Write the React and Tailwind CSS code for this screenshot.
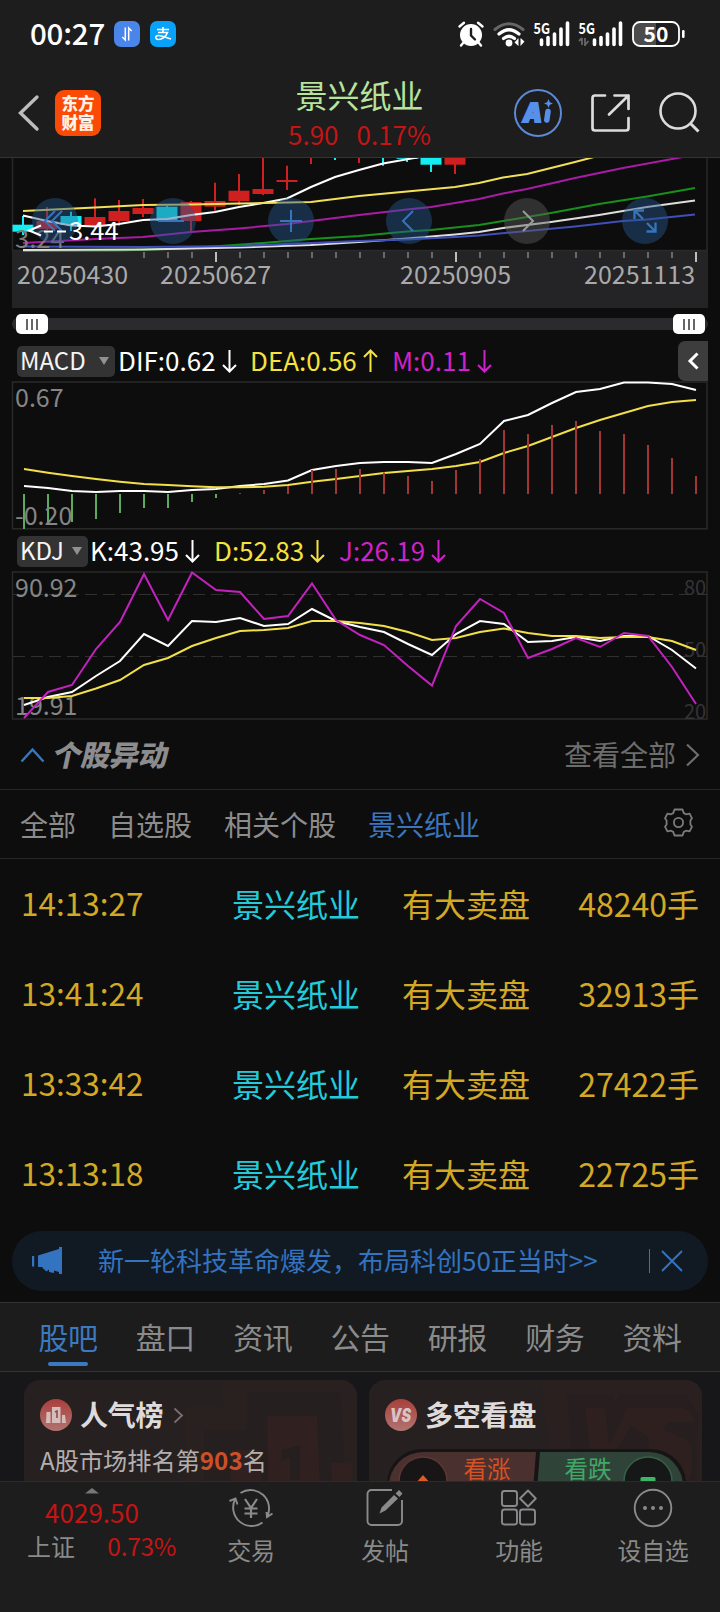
import React from "react";

const STEP = 24;
const toPoints = (ys, x0 = 24) => ys.map((y, i) => `${x0 + i * STEP},${y}`).join(" ");

const UP = "#cf1f1f";
const DOWN = "#14eef2";

// centre x, body top, body bottom, wick top, wick bottom, colour
const candles = [
  [23, 224.7, 231.7, 216, 235, DOWN],
  [47, 221, 229, 207, 230, UP],
  [71, 216, 225, 211.7, 231, DOWN],
  [95, 217, 226, 198.3, 228, UP],
  [119, 211, 221, 200, 226, UP],
  [143, 208, 214, 199, 217, UP],
  [167, 206.7, 221, 206, 222, DOWN],
  [191, 202, 221, 201, 232.7, UP],
  [215, 201, 206.7, 182.7, 210.7, UP],
  [239, 190.7, 201, 174, 205, UP],
  [263, 189, 194, 157, 195, UP],
  [287, 180, 182, 165.7, 190, UP],
  [311, 150, 151, 150, 164, UP],
  [335, 150, 151, 150, 160, DOWN],
  [359, 150, 151, 150, 163, UP],
  [383, 150, 151, 150, 165.7, DOWN],
  [407, 150, 158.8, 150, 162, DOWN],
  [431, 150, 164.7, 150, 172, DOWN],
  [455, 150, 164.7, 150, 174, UP],
];

const dif = [486, 488, 491, 492, 491, 491, 492, 490, 489, 486, 484, 480.5, 470, 466, 463, 462, 462, 463, 454, 444, 421, 415, 403, 392, 389, 382.5, 382.5, 384, 390];
const dea = [469, 472.7, 476, 479, 481.7, 484, 485, 486.3, 487.3, 487.3, 486.7, 485, 481.7, 479, 476, 473, 471, 469, 466, 462, 453, 446, 437, 428, 420, 413, 406, 402, 400];
const macd = [529, 525, 522, 519, 513, 508, 508, 502, 498, 493, 490, 486, 470, 469, 469, 472.5, 476, 481, 470, 459, 430, 434, 425, 421, 431, 434, 445, 458, 476];

const kLine = [705, 697, 692, 676, 661, 634, 646, 621, 622, 618, 626, 624, 609, 621, 627, 632, 644, 655, 634, 621, 624, 642, 641, 637, 641, 636, 636, 650, 668.5];
const dLine = [698, 698, 696, 688.5, 680, 665, 658, 646, 638, 631, 630, 628, 621, 621, 623, 626, 632, 640, 638, 632, 628.5, 633, 636, 636, 638, 637, 637, 641, 650];
const jLine = [718, 692, 685, 649, 622, 574, 620, 572.5, 590, 592, 619, 616, 583.5, 620, 635, 645, 666, 685.5, 626, 599, 613, 658, 649, 638, 647, 633, 636, 667, 704];

function Battery() {
  return (
    <svg className="block overflow-visible" width="54" height="28" viewBox="0 0 54 28">
      <path d="M8 2h16v24H8a7 7 0 0 1-7-7V9a7 7 0 0 1 7-7z" fill="#4b4b4b" />
      <rect x="1" y="2" width="46" height="24" rx="7" fill="none" stroke="#fff" strokeWidth="1.8" />
      <rect x="50" y="10" width="2.6" height="8" rx="1.2" fill="#fff" />
      <text x="24" y="21.800" fill="#fff" fontSize="21" fontWeight="700" textAnchor="middle">50</text>
    </svg>
  );
}

function Signal({ faded }) {
  return (
    <svg className="block overflow-visible" width="45" height="28" viewBox="0 0 45 28">
      <text x="0.5" y="13.600" fill="#fff" fontSize="15" fontWeight="700" textLength="16.500" lengthAdjust="spacingAndGlyphs">5G</text>
      {faded && <path d="M4 18v7M4 18l-3 3M7 18v8M7 25l3.500-4" stroke="#666" strokeWidth="1.800" fill="none" />}
      <g stroke="#fff" strokeWidth="3.600" strokeLinecap="round">
        {faded ? (
          <path d="M16.500 20v4.500M23 17.500v7M29.500 14v10.500M36 9v15.500M42.500 3v21.500" />
        ) : (
          <path d="M8.500 20v4.500M15 17.500v7M21.500 14v10.500M28 9v15.500M34.500 3v21.500" />
        )}
      </g>
    </svg>
  );
}

function StatusBar() {
  return (
    <div className="flex h-[68px] items-center pl-[30px] pr-[34px]">
      <span className="mb-[3px] w-[84px] text-[29.500px] font-medium leading-none tracking-[-0.200px] text-white">00:27</span>
      <svg className="block" width="26" height="26" viewBox="0 0 26 26">
        <rect width="26" height="26" rx="7" fill="#4a86ea" />
        <path d="M11.300 6.500v12.500l-3-3M14.700 19.500V7l3 3" stroke="#fff" strokeWidth="1.500" fill="none" />
      </svg>
      <span className="ml-[10px] flex h-[26px] w-[26px] items-center justify-center rounded-[7px] bg-[#08a2f8]">
        <svg width="18" height="16" viewBox="0 0 18 16">
          <path d="M3 3.500h12M9 1v5.500M4 6.500h9.500C12 10.500 8 13.500 4.500 13.500 1.500 13.500.8 10.800 3 9.700 6 8.300 11 11.500 17 13" stroke="#fff" strokeWidth="1.600" fill="none" />
        </svg>
      </span>
      <div className="ml-auto flex items-center">
        <svg className="block" width="28" height="28" viewBox="0 0 28 28">
          <circle cx="14" cy="15" r="11" fill="#fff" />
          <path d="M2.500 6.500L7 2.800M25.500 6.500L21 2.800M6.500 22.500L4 25.500M21.500 22.500L24 25.500" stroke="#fff" strokeWidth="2.400" strokeLinecap="round" />
          <path d="M14 9v6.500l4 4" stroke="#1d1d1d" strokeWidth="2.400" fill="none" strokeLinecap="round" />
        </svg>
        <svg className="ml-2 block" width="33" height="28" viewBox="0 0 33 28">
          <path d="M2 9.500Q16 -2 30 9.500" stroke="#666" strokeWidth="3" fill="none" strokeLinecap="round" />
          <path d="M6 14Q16 5.500 26 14M10.500 18.500Q16 14 21.500 18.500" stroke="#fff" strokeWidth="3.200" fill="none" strokeLinecap="round" />
          <circle cx="16" cy="23" r="3.400" fill="#fff" />
          <path d="M25.500 18v8l-4-3.500zM27.500 18v8l4-4.500z" fill="#fff" />
        </svg>
        <div className="ml-[7px]"><Signal /></div>
        <div><Signal faded /></div>
        <div className="ml-[9px]"><Battery /></div>
      </div>
    </div>
  );
}

function Header() {
  return (
    <div className="flex h-[90px] items-start border-b border-[#333] pl-[17px]">
      <svg className="mt-[26px] block" width="24" height="38" viewBox="0 0 24 38">
        <path d="M20 3L3.500 19 20 35" stroke="#bdbdbd" strokeWidth="3.400" fill="none" strokeLinecap="round" />
      </svg>
      <div className="ml-[14px] mt-[22px] flex h-[46px] w-[46px] items-center justify-center rounded-[9px] bg-[#fb4a05] text-[16.500px] font-black leading-[19px] text-[#fff3e8]">
        <span>东方<br />财富</span>
      </div>
      <div className="ml-[187px] flex w-[143px] flex-col items-center">
        <span className="mt-[7px] text-[32px] leading-[38px] text-[#b7e39c]">景兴纸业</span>
        <div className="mt-[2px] flex w-full justify-between text-[26px] leading-[38px] text-[#c41414]">
          <span>5.90</span>
          <span>0.17%</span>
        </div>
      </div>
      <svg className="ml-[82px] mt-[20px] block overflow-visible" width="50" height="50" viewBox="0 0 50 50">
        <circle cx="25" cy="25" r="23" fill="none" stroke="#5b8ad6" strokeWidth="2" />
        <text x="10" y="33.500" fill="#5790ea" stroke="#5790ea" strokeWidth="2" fontFamily="Inter, sans-serif" fontSize="26" fontWeight="900" fontStyle="italic" textLength="19" lengthAdjust="spacingAndGlyphs">A</text>
        <path d="M35 23.500L33.800 32" stroke="#5790ea" strokeWidth="5.500" strokeLinecap="round" />
        <path d="M35.500 11l1.300 3.200 3.200 1.300-3.200 1.300-1.300 3.200-1.300-3.200-3.200-1.300 3.200-1.300z" fill="#5790ea" />
      </svg>
      <svg className="ml-[26px] mt-[24px] block" width="42" height="42" viewBox="0 0 42 42">
        <path d="M16 3.500H6A2.500 2.500 0 0 0 3.500 6v30A2.500 2.500 0 0 0 6 38.500h31A2.500 2.500 0 0 0 39.500 36V26M25.500 3.500h14V17M39.500 3.500L20 22.500" stroke="#dcdcdc" strokeWidth="2.700" fill="none" strokeLinecap="round" strokeLinejoin="round" />
      </svg>
      <svg className="ml-[27px] mt-[23px] block" width="44" height="44" viewBox="0 0 44 44">
        <circle cx="20" cy="20" r="17.500" stroke="#dcdcdc" strokeWidth="2.600" fill="none" />
        <path d="M32 32l8.500 8.500" stroke="#dcdcdc" strokeWidth="3" />
      </svg>
    </div>
  );
}

function PriceChart() {
  return (
    <svg className="block" width="720" height="151" viewBox="0 158 720 151">
      <rect x="12" y="250.500" width="696" height="57.500" fill="#242426" />
      <path d="M12.500 157V250.500H707V157" stroke="#282829" strokeWidth="1.500" fill="none" />
      {candles.map(([x, t, b, wt, wb, c]) => (
        <g key={x} fill={c}>
          <rect x={x - 10.5} y={t} width="21" height={b - t} />
          <rect x={x - 1} y={wt} width="2" height={wb - wt} />
        </g>
      ))}
      <g fill="none" strokeWidth="2">
        <polyline stroke="#17911c" points="23,251 120,250.500 191,248 263,243 311,239 359,236 407,231.500 431,230 479,225 503,221 551,213 599,204 647,196.500 695,188" />
        <polyline stroke="#dedede" points="23,250 143,249.500 239,247.500 311,245 359,242 407,238.500 455,234.500 479,232 503,228 551,222 599,215 647,207 695,200.500" />
        <polyline stroke="#3f4fb8" points="23,246.500 143,247 239,246 311,243 359,241 407,239.500 455,237 479,235.500 527,231 575,226.500 623,221 647,219.500 695,214.500" />
        <polyline stroke="#a81ca5" points="23,243 95,239 143,237 191,232 239,228.500 287,224 311,221 359,215 407,209.500 431,207 479,199 503,193.500 527,189 575,178 623,168 683,157" />
        <polyline stroke="#fff" points="23,215.500 47,221 71,225.500 95,226.500 119,224 143,220 167,219 191,215 215,212 239,207 263,203 287,198.500 311,187 335,177 359,170 383,163.500 420,157" />
        <polyline stroke="#f2e05a" points="23,211 95,207.500 143,205 191,204.500 239,203.500 287,202.500 311,202 359,196 407,191.500 455,187 479,183 503,177.500 527,174 551,168 575,162 594,157" />
      </g>
      <text x="15" y="248" fill="#7d7d7d" fontSize="25.500">3.24</text>
      {[55, 173, 291, 409, 527, 645].map((x) => (
        <circle key={x} cx={x} cy="221" r="23" fill={x === 527 ? "#5c5c5c" : "#26578f"} opacity="0.45" />
      ))}
      <g fill="none" stroke="#3674bd" strokeWidth="2">
        <path d="M55 211L45 221l10 10M62 211L52 221l10 10M158 221h26M280 221h22M291 210v22M413 211l-10 10 10 10" />
        <path d="M643 219l-8-8M634.500 219v-8.500h9.500M647 223l8 8M655.500 222.500v9h-9" strokeWidth="2.300" />
      </g>
      <path d="M523 211l10 10-10 10" fill="none" stroke="#9a9a9a" strokeWidth="2" />
      <path d="M41 225.500l-12 5 12 5M44 231.500h9M57 231.500h9" stroke="#fff" strokeWidth="2" fill="none" />
      <text x="69" y="240" fill="#fff" fontSize="25.500">3.44</text>
      {Array.from({ length: 24 }, (_, i) => {
        const x = 144 + i * STEP;
        const major = x === 216 || x === 456 || x === 696;
        return <rect key={x} x={x - 1} y="252" width="2" height={major ? 10 : 6} fill={major ? "#bdbdbd" : "#6a6a6a"} />;
      })}
      <g fill="#a9a9a9" fontSize="25">
        <text x="17" y="284">20250430</text>
        <text x="160" y="284">20250627</text>
        <text x="400" y="284">20250905</text>
        <text x="584" y="284">20251113</text>
      </g>
    </svg>
  );
}

function Handle() {
  return (
    <div className="flex h-5 w-8 items-center justify-center gap-[3px] rounded-[5px] bg-white">
      <i className="h-[11px] w-[2px] bg-[#666]" />
      <i className="h-[11px] w-[2px] bg-[#666]" />
      <i className="h-[11px] w-[2px] bg-[#666]" />
    </div>
  );
}

function RangeSlider() {
  return (
    <div className="mx-3 mt-[9px] flex h-3 items-center justify-between rounded-full bg-[#2b2b2d] pl-1 pr-[3px]">
      <Handle />
      <Handle />
    </div>
  );
}

function Arrow({ up }) {
  return (
    <svg className="mx-[6px] block" width="15" height="24" viewBox="0 0 15 24">
      <path d={up ? "M7.500 23V1.500M1 8l6.500-6.500L14 8" : "M7.500 1v21.500M1 16l6.500 6.500L14 16"} stroke="currentColor" strokeWidth="2" fill="none" />
    </svg>
  );
}

function Pill({ children, className }) {
  return (
    <div className={`flex h-[31px] items-center justify-between rounded-[5px] bg-[#333] pl-[3px] pr-[6px] text-[24px] leading-none text-[#f5f5f5] ${className}`}>
      <span className="mb-[3px]">{children}</span>
      <svg className="block" width="10" height="8" viewBox="0 0 10 8"><path d="M0 0h10L5 8z" fill="#919191" /></svg>
    </div>
  );
}

function Metric({ color, up, children, className = "" }) {
  return (
    <div className={`flex items-center text-[26px] leading-none ${color} ${className}`}>
      <span className="mb-[3px]">{children}</span>
      <Arrow up={up} />
    </div>
  );
}

function MacdPanel() {
  return (
    <>
      <div className="mt-[11px] flex h-10 items-center pl-[17px] pr-3">
        <Pill className="w-[98px]">MACD</Pill>
        <Metric className="ml-[3px] w-[132px]" color="text-white">DIF:0.62</Metric>
        <Metric className="w-[142px]" color="text-[#f5e23c]" up>DEA:0.56</Metric>
        <Metric color="text-[#cf22cb]">M:0.11</Metric>
        <div className="ml-auto flex h-10 w-[30px] items-center justify-center rounded-l-[7px] bg-[#3d3d3d]">
          <svg width="12" height="18" viewBox="0 0 12 18"><path d="M10.500 1.500L3 9l7.500 7.500" stroke="#fff" strokeWidth="3" fill="none" /></svg>
        </div>
      </div>
      <svg className="block" width="720" height="150" viewBox="0 381 720 150">
        <rect x="12.500" y="382" width="694.500" height="146.800" fill="none" stroke="#2a2a2b" strokeWidth="1.500" />
        <g fill="none" strokeWidth="2">
          <polyline stroke="#fff" points={toPoints(dif)} />
          <polyline stroke="#f2e04a" points={toPoints(dea)} />
        </g>
        {macd.map((y, i) => (
          <rect key={i} x={23 + i * STEP} y={Math.min(494, y)} width="2" height={Math.abs(494 - y)} fill={y > 494 ? "#5cab5c" : "#a23632"} />
        ))}
        <g fill="#858585" fontSize="25">
          <text x="15" y="407">0.67</text>
          <text x="15" y="525">-0.20</text>
        </g>
      </svg>
    </>
  );
}

function KdjPanel() {
  return (
    <>
      <div className="flex h-10 items-center pl-[17px]">
        <Pill className="w-[71px]">KDJ</Pill>
        <Metric className="ml-[2px] w-[124px]" color="text-white">K:43.95</Metric>
        <Metric className="w-[125px]" color="text-[#f5e23c]">D:52.83</Metric>
        <Metric color="text-[#cf22cb]">J:26.19</Metric>
      </div>
      <svg className="block" width="720" height="149" viewBox="0 571 720 149">
        <rect x="12.500" y="572" width="694.500" height="147" fill="none" stroke="#2a2a2b" strokeWidth="1.500" />
        <path d="M13 594.500H707M13 656.500H707" stroke="#303031" strokeWidth="1.200" strokeDasharray="12 6" />
        <g fill="#343436" fontSize="20">
          <text x="684" y="594.500">80</text>
          <text x="684" y="656.500">50</text>
          <text x="684" y="718.500">20</text>
        </g>
        <g fill="#858585" fontSize="25">
          <text x="15" y="597">90.92</text>
          <text x="15" y="715">19.91</text>
        </g>
        <g fill="none" strokeWidth="2">
          <polyline stroke="#fff" points={toPoints(kLine)} />
          <polyline stroke="#f2e04a" points={toPoints(dLine)} />
          <polyline stroke="#c422bf" points={toPoints(jLine)} />
        </g>
      </svg>
    </>
  );
}

const moves = [
  ["14:13:27", "48240手"],
  ["13:41:24", "32913手"],
  ["13:33:42", "27422手"],
  ["13:13:18", "22725手"],
];

function Moves() {
  return (
    <section>
      <div className="flex h-[70px] items-center border-b border-[#252527] pl-5 pr-5">
        <svg className="block" width="26" height="16" viewBox="0 0 26 16"><path d="M1.500 14.500L12.500 2.500l11 12" stroke="#3b76bd" strokeWidth="2.500" fill="none" /></svg>
        <h2 className="mb-[3px] ml-[8px] -skew-x-12 text-[29px] font-black leading-none tracking-[-0.300px] text-[#8c8c8f]">个股异动</h2>
        <span className="mb-[2px] ml-auto text-[28px] leading-none text-[#6d6d6d]">查看全部</span>
        <svg className="ml-[9px] block" width="15" height="24" viewBox="0 0 15 24"><path d="M2 1.500L13 12 2 22.500" stroke="#6d6d6d" strokeWidth="2.200" fill="none" /></svg>
      </div>
      <div className="flex h-[69px] items-center gap-8 border-b border-[#252527] pb-[1px] pl-5 pr-[27px] text-[28px] leading-none text-[#8c8c8c]">
        <span>全部</span>
        <span>自选股</span>
        <span>相关个股</span>
        <span className="text-[#3b76bd]">景兴纸业</span>
        <svg className="mb-[2px] ml-auto block" width="29" height="29" viewBox="0 0 29 29" fill="none" stroke="#7b7b7b" strokeWidth="1.800" strokeLinejoin="round">
          <path d="M10.500 1.500h8l1.300 3.600 2.200 1.200 3.600-.6 2.400 4.600-1.600 2.200v4l1.600 2.200-2.400 4.600-3.600-.6-2.200 1.200-1.300 3.600h-8L9.200 23.900 7 22.700l-3.600.6L1 18.700l1.600-2.200v-4L1 10.300l2.400-4.600 3.600.6 2.200-1.200z" />
          <circle cx="14.500" cy="14.500" r="4.600" />
        </svg>
      </div>
      {moves.map(([time, volume]) => (
        <div key={time} className="flex h-[90px] items-center pb-[3px] pl-[21px] pr-[21px] text-[32px] leading-none text-[#d3a825]">
          <span className="w-[211px] text-[31.500px]">{time}</span>
          <span className="w-[170px] text-[#22cbdc]">景兴纸业</span>
          <span>有大卖盘</span>
          <span className="ml-auto">{volume}</span>
        </div>
      ))}
    </section>
  );
}

function Banner() {
  return (
    <div className="mx-3 mt-[12px] flex h-[60px] items-center rounded-[30px] bg-[#111a22] pl-5 pr-[25px] text-[#3473c0]">
      <svg className="block" width="31" height="28" viewBox="0 0 31 28" fill="currentColor">
        <rect y="9" width="2.200" height="10.500" />
        <path d="M6 8.500L27 2V0h3v27h-3v-2l-5-1.500v2.500l-5-1v-2.500l-2.500 2-4-3.500v-1L6 20z" />
      </svg>
      <span className="mb-[2px] ml-[35px] text-[26px] leading-none">新一轮科技革命爆发，布局科创50正当时&gt;&gt;</span>
      <i className="ml-auto mr-[11px] h-6 w-px bg-[#3473c0]" />
      <svg className="block" width="22" height="22" viewBox="0 0 22 22"><path d="M1 1l20 20M21 1L1 21" stroke="currentColor" strokeWidth="2" /></svg>
    </div>
  );
}

function SectionTabs() {
  return (
    <div className="mt-[11px] flex h-[70px] justify-between border-y border-[#333] bg-[#1c1c1c] px-[38px] text-[30px] text-[#8b8b8b]">
      {["股吧", "盘口", "资讯", "公告", "研报", "财务", "资料"].map((t, i) => (
        <div key={t} className={i === 0 ? "flex w-[60px] flex-col items-center text-[#3b79c0]" : "flex w-[60px] flex-col items-center"}>
          <span className="mt-[11px] whitespace-nowrap leading-[44px] tracking-[-0.500px]">{t}</span>
          {i === 0 && <i className="mt-[4px] h-1 w-[40px] rounded-full bg-[#3b79c0]" />}
        </div>
      ))}
    </div>
  );
}

function Cards() {
  return (
    <div className="flex h-[109px] gap-3 overflow-hidden bg-[#17171a] pl-6 pr-[18px] pt-2">
      <div className="relative h-[140px] w-[333px] shrink-0 overflow-hidden rounded-[16px] bg-[#272020]">
        <svg className="absolute left-0 top-0" width="333" height="110" viewBox="0 0 333 110">
          <path d="M198 0v26h-36v84h171V0z" fill="#292120" />
          <path d="M223 12h93l6 98H180V50h43z" fill="#251f1f" />
          <path d="M243 36h50l3 74h-52zM208 70h29v40h-32zM307 83h21v27h-20z" fill="#302120" />
          <path d="M258 70l18-5v35h-10V77l-9 4z" fill="#251f1f" />
        </svg>
        <div className="relative flex h-[70px] items-center pl-4">
          <svg className="block" width="32" height="32" viewBox="0 0 32 32">
            <defs><linearGradient id="badgeA" x1="0" y1="0" x2="0" y2="1"><stop offset="0" stopColor="#a93f3c" /><stop offset="1" stopColor="#b17470" /></linearGradient></defs>
            <circle cx="16" cy="16" r="16" fill="url(#badgeA)" />
            <path d="M6.500 13h4v11H6zM12 8h8.500v16H12zM22 16h3l1 8h-4z" fill="#d6bdbc" />
            <path d="M15 13l2-1v7" stroke="#8d4c4a" strokeWidth="1.600" fill="none" />
          </svg>
          <span className="mb-[2px] ml-[8px] text-[28px] font-bold leading-none tracking-[-0.200px] text-[#dfdbdb]">人气榜</span>
          <svg className="ml-[10px] block" width="11" height="17" viewBox="0 0 11 17"><path d="M1.500 1.500L9 8.500l-7.500 7" stroke="#777070" strokeWidth="1.800" fill="none" /></svg>
        </div>
        <div className="relative -mt-[2px] flex items-center pl-4 text-[24.200px] leading-[24px] text-[#b4afaf]">
          <span>A股市场排名第</span>
          <b className="text-[#cb5027]">903</b>
          <span>名</span>
        </div>
      </div>
      <div className="relative h-[140px] w-[333px] shrink-0 overflow-hidden rounded-[16px] bg-[#272020]">
        <svg className="absolute left-0 top-0" width="333" height="110" viewBox="0 0 333 110">
          <path d="M172 0h161v110H185z" fill="#2a2020" />
          <path d="M198 14h45l2 10 6-10h66l12 20-2 76H206z" fill="#261e1f" />
          <path d="M216 28h20l4 38 18-38h56q10 4 12 14h-24q-8 2-6 8l22 10q10 14 2 40h-40V58l-18-12-22 36h-18z" fill="#2f2020" />
          <path d="M18 110V104a35 35 0 0 1 35-35H282a35 35 0 0 1 35 35v6z" fill="#171416" />
          <path d="M20 110V106a34 34 0 0 1 34-34H167L164 110z" fill="#4b3030" />
          <path d="M171 72H280a34 34 0 0 1 34 34v4H168z" fill="#304339" />
          <circle cx="54" cy="101" r="24" fill="#181517" stroke="#5a3732" strokeWidth="1.500" />
          <circle cx="279" cy="101" r="24" fill="#151817" stroke="#356049" strokeWidth="1.500" />
          <path d="M54 95l8 9H46z" fill="#e05a26" />
          <rect x="271.500" y="97" width="15" height="6" rx="1.500" fill="#3fb469" />
          <g fontSize="23.500">
            <text x="94.500" y="97.500" fill="#d75222">看涨</text>
            <text x="195.500" y="97.500" fill="#41a965">看跌</text>
          </g>
        </svg>
        <div className="relative flex h-[70px] items-center pl-4">
          <svg className="block overflow-visible" width="32" height="32" viewBox="0 0 32 32">
            <circle cx="16" cy="16" r="16" fill="url(#badgeA)" />
            <text x="5" y="22.500" fill="#d9c3c2" fontFamily="Inter, sans-serif" fontSize="19" fontWeight="900" fontStyle="italic" textLength="21" lengthAdjust="spacingAndGlyphs">VS</text>
          </svg>
          <span className="mb-[2px] ml-[8px] text-[28px] font-bold leading-none tracking-[-0.200px] text-[#dfdbdb]">多空看盘</span>
        </div>
      </div>
    </div>
  );
}

function NavItem({ label, children }) {
  return (
    <div className="flex w-[134px] flex-col items-center pt-[4px] text-[24px] leading-[30px] text-[#8a8a8a]">
      <svg className="mb-[5px] block" width="44" height="44" viewBox="0 0 44 44" fill="none" stroke="#8a8a8d" strokeWidth="1.900">{children}</svg>
      <span className="tracking-[-0.300px]">{label}</span>
    </div>
  );
}

function BottomNav() {
  return (
    <div className="flex h-[131px] border-t border-[#2b2b2b] bg-[#1d1d1d]">
      <div className="flex w-[184px] flex-col items-center pt-[6px]">
        <svg className="block" width="14" height="6" viewBox="0 0 14 6"><path d="M7 0l7 5.500H0z" fill="#77777a" /></svg>
        <span className="mt-[1px] text-[26px] leading-[34px] text-[#c41414]">4029.50</span>
        <div className="flex w-full items-center justify-between pl-[27px] pr-[8px] text-[24px] leading-[34px]">
          <span className="text-[#8a8a8a]">上证</span>
          <span className="text-[24.500px] tracking-[-0.300px] text-[#c41414]">0.73%</span>
        </div>
      </div>
      <NavItem label="交易">
        <path d="M11.500 7A18.500 18.500 0 0 1 38 31M33.500 36.500A18.500 18.500 0 0 1 6.500 12.500M0.500 15l6-2.500 2 6M43.500 27.500l-5.500 3.500-.5-5" />
        <path d="M16 13l6 9 6-9M15.500 22.500h13M15.500 27.500h13M22 22v10" strokeWidth="2.200" />
      </NavItem>
      <NavItem label="发帖">
        <path d="M29 4H8.500A4 4 0 0 0 4.500 8v27a4 4 0 0 0 4 4H35a4 4 0 0 0 4-4V14" />
        <path d="M16.500 27.500l2-6L31 9l4 3.500-12.500 12zM32.500 7.500L36 4l3.500 3.500-3 3.500z" fill="#8a8a8d" stroke="none" />
      </NavItem>
      <NavItem label="功能">
        <rect x="5" y="5" width="15" height="15" rx="2.500" />
        <rect x="5" y="23.500" width="15" height="15" rx="2.500" />
        <rect x="23" y="23.500" width="15" height="15" rx="2.500" />
        <path d="M31 4.500l7.800 8-7.800 8-8-8z" strokeLinejoin="round" />
      </NavItem>
      <NavItem label="设自选">
        <circle cx="22" cy="22" r="18.300" />
        <g fill="#8a8a8d" stroke="none">
          <circle cx="14" cy="22" r="2" />
          <circle cx="22" cy="22" r="2" />
          <circle cx="30" cy="22" r="2" />
        </g>
      </NavItem>
    </div>
  );
}

export default function App() {
  return (
    <div className="h-[1612px] w-[720px] overflow-hidden bg-[#0d0d0d] font-['Noto_Sans_CJK_SC',sans-serif]">
      <div className="bg-[#1d1d1d]">
        <StatusBar />
        <Header />
      </div>
      <PriceChart />
      <RangeSlider />
      <MacdPanel />
      <KdjPanel />
      <Moves />
      <Banner />
      <SectionTabs />
      <Cards />
      <BottomNav />
    </div>
  );
}
